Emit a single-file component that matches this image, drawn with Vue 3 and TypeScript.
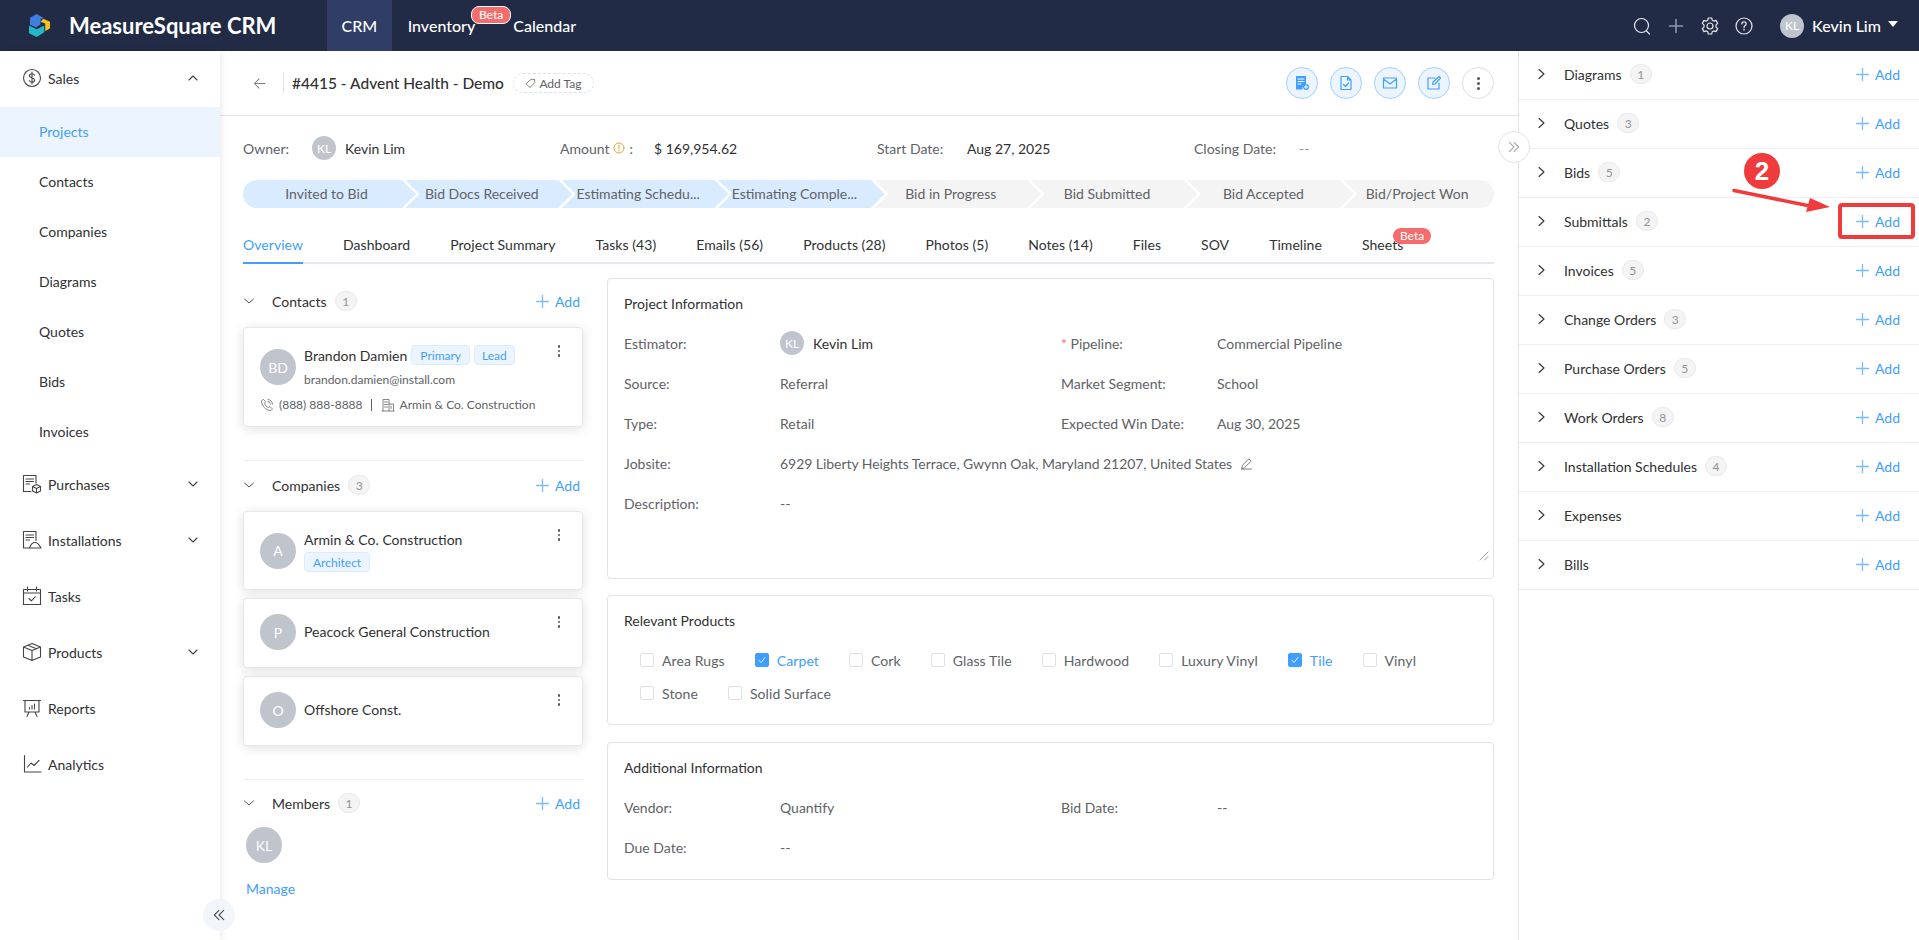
<template>
  <div class="app">
    <header class="topbar">
      <svg class="logo" viewBox="0 0 22 24">
        <path d="M8 0l7 4-3 2v5l-5 3-6-3V4z" fill="#3f7fe0" />
        <path d="M15 5l7 3v7l-5 3v-8l-5-2z" fill="#f5c21b" />
        <path d="M0 12l8 4 8-4v7l-8 5-8-4z" fill="#22b8c9" />
      </svg>
      <div class="brand">MeasureSquare CRM</div>
      <nav class="topnav">
        <a class="topnav-item active">CRM</a>
        <a class="topnav-item inventory">Inventory<span class="beta beta-top">Beta</span></a>
        <a class="topnav-item calendar">Calendar</a>
      </nav>
      <div class="top-right">
        <svg class="top-icon" viewBox="0 0 20 20"><path d="M9.5 2.5a7 7 0 1 0 0 14a7 7 0 0 0 0-14z M14.5 15l3 3" /></svg>
        <svg class="top-icon plus-icon" viewBox="0 0 20 20"><path d="M10 3.500v13 M3.500 10h13" /></svg>
        <svg class="top-icon" viewBox="0 0 20 20"><path d="M8.300 2h3.400l.5 2.200 1.600.9 2.200-.7 1.700 3-1.700 1.500v2.200l1.700 1.500-1.700 3-2.200-.7-1.600.9-.5 2.200H8.300l-.5-2.200-1.600-.9-2.200.7-1.700-3 1.700-1.500V8.900L2.300 7.400l1.700-3 2.200.7 1.600-.9z M10 7a3 3 0 1 0 0 6a3 3 0 0 0 0-6z" /></svg>
        <svg class="top-icon" viewBox="0 0 20 20"><path d="M10 2a8 8 0 1 0 0 16a8 8 0 0 0 0-16z M7.800 8c0-1.300 1-2.100 2.200-2.100s2.200.8 2.200 2c0 1.700-2.200 1.700-2.200 3.500 M10 13.200v1" /></svg>
        <div class="avatar avatar-top">KL</div>
        <span class="top-name">Kevin Lim</span>
        <span class="caret"></span>
      </div>
    </header>

    <div class="body">
      <aside class="sidebar">
        <div class="side-group">
          <svg class="side-icon" viewBox="0 0 20 20"><path :d="icons.sales" /></svg>
          <span class="side-label">Sales</span>
          <svg class="side-chev" viewBox="0 0 12 12"><path d="M2 8l4-4 4 4" /></svg>
        </div>
        <div v-for="s in subItems" :key="s" class="side-sub" :class="{ active: s === 'Projects' }">{{ s }}</div>
        <div v-for="g in groups" :key="g.name" class="side-group">
          <svg class="side-icon" viewBox="0 0 20 20"><path :d="g.icon" /></svg>
          <span class="side-label">{{ g.name }}</span>
          <svg v-if="g.more" class="side-chev" viewBox="0 0 12 12"><path d="M2 4l4 4 4-4" /></svg>
        </div>
        <button class="collapse-btn">
          <svg viewBox="0 0 12 12"><path d="M6 2L2 6l4 4 M10 2L6 6l4 4" /></svg>
        </button>
      </aside>

      <main class="main">
        <div class="title-row">
          <svg class="back" viewBox="0 0 14 14"><path d="M13 7H1.500 M6.500 2L1.500 7l5 5" /></svg>
          <span class="title-div"></span>
          <h1 class="title">#4415 - Advent Health - Demo</h1>
          <span class="add-tag">
            <svg viewBox="0 0 12 12"><path d="M7 1.500h3.500V5L5.500 10.500 1.500 6.500z" /></svg>
            Add Tag
          </span>
          <div class="actions">
            <span class="act">
              <svg viewBox="0 0 16 16"><path class="fill" d="M2 1h10v8.500a4 4 0 0 0-3.500 5H2z" /><path class="cut" d="M4 4h6 M4 6.500h6 M4 9h3" /><circle class="fill" cx="12" cy="12" r="3" /><path class="cut" d="M12 10.300v3.400 M10.300 12h3.400" /></svg>
            </span>
            <span class="act">
              <svg viewBox="0 0 16 16"><path class="line" d="M3 1.500h6.500L13 5v9.500H3z M9.500 1.500V5H13 M5.500 9.500L7.500 11.500 10.500 8" /></svg>
            </span>
            <span class="act">
              <svg viewBox="0 0 16 16"><path class="line" d="M1.500 3h13v10h-13z M1.500 4L8 9l6.500-5" /></svg>
            </span>
            <span class="act">
              <svg viewBox="0 0 16 16"><path class="line" d="M13 8v6H2V3h7 M6.500 9.500l.5-2.500L13 1.500 14.500 3 9 9z" /></svg>
            </span>
            <span class="act act-more"><i></i><i></i><i></i></span>
          </div>
        </div>

        <div class="page">
          <div class="summary">
            <div class="sum-item">
              <span class="sum-label owner-label">Owner:</span>
              <div class="avatar avatar-sm">KL</div>
              <span class="sum-name">Kevin Lim</span>
            </div>
            <div class="sum-item">
              <span class="sum-label amount-label">Amount
                <svg class="warn" viewBox="0 0 12 12"><circle cx="6" cy="6" r="5" /><path d="M6 3v3.600 M6 8.200v1" /></svg> :
              </span>
              <span class="sum-value">$ 169,954.62</span>
            </div>
            <div class="sum-item">
              <span class="sum-label start-label">Start Date:</span>
              <span class="sum-value">Aug 27, 2025</span>
            </div>
            <div class="sum-item">
              <span class="sum-label closing-label">Closing Date:</span>
              <span class="sum-value muted">--</span>
            </div>
          </div>

          <div class="stages">
            <div v-for="(st, i) in stages" :key="st" class="stage" :class="{ done: i < 4, first: i === 0, last: i === stages.length - 1 }">{{ st }}</div>
          </div>

          <div class="tabs">
            <div v-for="t in tabs" :key="t" class="tab" :class="{ active: t === 'Overview' }">
              {{ t }}
              <span v-if="t === 'Sheets'" class="beta beta-tab">Beta</span>
            </div>
          </div>

          <div class="content">
            <section class="left">
              <div class="sec sec-first">
                <div class="sec-head">
                  <svg class="sec-chev" viewBox="0 0 12 12"><path d="M1.500 4l4.500 4 4.500-4" /></svg>
                  <span class="sec-title">Contacts</span>
                  <span class="count">1</span>
                  <span class="add add-right"><svg class="plus" viewBox="0 0 14 14"><path d="M7 .5v13 M.5 7h13" /></svg>Add</span>
                </div>
                <div class="card contact-card">
                  <div class="contact-top">
                    <div class="avatar avatar-md">BD</div>
                    <div class="contact-main">
                      <div class="contact-name">Brandon Damien <span class="tag">Primary</span><span class="tag tag-lead">Lead</span></div>
                      <div class="contact-mail">brandon.damien@install.com</div>
                    </div>
                  </div>
                  <div class="contact-meta">
                    <svg class="meta-icon" viewBox="0 0 14 14"><path d="M3 1.500L1.500 3c0 5 4.500 9.500 9.500 9.500l1.500-1.500-2.500-2.500-1.500 1C6.500 8.800 5.200 7.500 4.500 5.500l1-1.500z M8 1.500A4.500 4.500 0 0 1 12.500 6 M8 3.500A2.500 2.500 0 0 1 10.500 6" /></svg>
                    <span>(888) 888-8888</span>
                    <span class="meta-sep"></span>
                    <svg class="meta-icon" viewBox="0 0 14 14"><path d="M1 13h12 M2 13V1.500h6V13 M8 6h4.500v7 M3.500 4h3 M3.500 6.500h3 M3.500 9h3 M10 8.500v2" /></svg>
                    <span>Armin &amp; Co. Construction</span>
                  </div>
                  <span class="dots"><i></i><i></i><i></i></span>
                </div>
              </div>

              <div class="sec">
                <div class="sec-head">
                  <svg class="sec-chev" viewBox="0 0 12 12"><path d="M1.500 4l4.500 4 4.500-4" /></svg>
                  <span class="sec-title">Companies</span>
                  <span class="count">3</span>
                  <span class="add add-right"><svg class="plus" viewBox="0 0 14 14"><path d="M7 .5v13 M.5 7h13" /></svg>Add</span>
                </div>
                <div class="company-list">
                  <div v-for="c in companies" :key="c.name" class="card company" :class="{ tall: c.tag }">
                    <div class="avatar avatar-md">{{ c.name[0] }}</div>
                    <div class="company-main">
                      <div class="company-name">{{ c.name }}</div>
                      <span v-if="c.tag" class="tag tag-arch">{{ c.tag }}</span>
                    </div>
                    <span class="dots"><i></i><i></i><i></i></span>
                  </div>
                </div>
              </div>

              <div class="sec sec-members">
                <div class="sec-head">
                  <svg class="sec-chev" viewBox="0 0 12 12"><path d="M1.500 4l4.500 4 4.500-4" /></svg>
                  <span class="sec-title">Members</span>
                  <span class="count">1</span>
                  <span class="add add-right"><svg class="plus" viewBox="0 0 14 14"><path d="M7 .5v13 M.5 7h13" /></svg>Add</span>
                </div>
                <div class="avatar avatar-md member">KL</div>
                <a class="manage">Manage</a>
              </div>
            </section>

            <section class="right">
              <div class="panel panel-info">
                <div class="panel-title">Project Information</div>
                <div class="form-grid">
                  <span class="f-label">Estimator:</span>
                  <span class="f-value est"><span class="avatar avatar-sm">KL</span><b>Kevin Lim</b></span>
                  <span class="f-label"><em>*</em> Pipeline:</span>
                  <span class="f-value">Commercial Pipeline</span>

                  <span class="f-label">Source:</span>
                  <span class="f-value">Referral</span>
                  <span class="f-label">Market Segment:</span>
                  <span class="f-value">School</span>

                  <span class="f-label">Type:</span>
                  <span class="f-value">Retail</span>
                  <span class="f-label">Expected Win Date:</span>
                  <span class="f-value">Aug 30, 2025</span>

                  <span class="f-label">Jobsite:</span>
                  <span class="f-value span3 jobsite">6929 Liberty Heights Terrace, Gwynn Oak, Maryland 21207, United States
                    <svg class="pencil" viewBox="0 0 14 14"><path d="M2 12l.6-3L9.500 2 12 4.500 5 11.400z M1.500 13h11" /></svg>
                  </span>

                  <span class="f-label">Description:</span>
                  <span class="f-value span3 muted">--</span>
                </div>
                <svg class="resize" viewBox="0 0 10 10"><path d="M1 9l8-8 M5.500 9L9 5.500" /></svg>
              </div>

              <div class="panel panel-products">
                <div class="panel-title">Relevant Products</div>
                <div class="checks">
                  <label v-for="p in products" :key="p.name" class="check" :class="{ on: p.on }">
                    <span class="box">
                      <svg v-if="p.on" viewBox="0 0 14 14"><path d="M3.500 7.300l2.400 2.700 4.600-6" /></svg>
                    </span>
                    {{ p.name }}
                  </label>
                </div>
              </div>

              <div class="panel panel-extra">
                <div class="panel-title">Additional Information</div>
                <div class="form-grid">
                  <span class="f-label">Vendor:</span>
                  <span class="f-value">Quantify</span>
                  <span class="f-label">Bid Date:</span>
                  <span class="f-value muted">--</span>
                  <span class="f-label">Due Date:</span>
                  <span class="f-value span3 muted">--</span>
                </div>
              </div>
            </section>
          </div>
        </div>
      </main>

      <aside class="related">
        <button class="expand-btn">
          <svg viewBox="0 0 12 12"><path d="M2 2l4 4-4 4 M6 2l4 4-4 4" /></svg>
        </button>
        <div v-for="r in related" :key="r.name" class="rel-row">
          <svg class="rel-chev" viewBox="0 0 12 12"><path d="M4 1.500L9 6l-5 4.500" /></svg>
          <span class="rel-name">{{ r.name }}</span>
          <span v-if="r.count" class="count">{{ r.count }}</span>
          <span class="add add-right"><svg class="plus" viewBox="0 0 14 14"><path d="M7 .5v13 M.5 7h13" /></svg>Add</span>
        </div>
      </aside>
    </div>

    <div class="mark-num">2</div>
    <svg class="mark-arrow" viewBox="0 0 105 30">
      <path d="M4 4.500L85 21" />
      <polygon points="80,12 100,21 76,26" />
    </svg>
    <div class="mark-box"></div>
  </div>
</template>

<script setup lang="ts">
const icons = {
  sales:
    'M10 1.500a8.500 8.500 0 1 0 0 17a8.500 8.500 0 0 0 0-17z M12.500 7.200c-.4-1-1.400-1.500-2.500-1.500-1.500 0-2.600.8-2.600 2 0 2.800 5.200 1.400 5.200 4.400 0 1.200-1.100 2.100-2.600 2.100-1.200 0-2.200-.6-2.600-1.600 M10 4v12',
}

const subItems = ['Projects', 'Contacts', 'Companies', 'Diagrams', 'Quotes', 'Bids', 'Invoices']

const groups = [
  {
    name: 'Purchases',
    more: true,
    icon: 'M9 17.500H1.500V1.500h12.500v7.500 M4 5h7.500 M4 7.500h7.500 M4 10h3.500 M14.500 10.500l4 2v4.500l-4 2-4-2v-4.500z M10.500 12.500l4 2 4-2 M14.500 14.500v4.500',
  },
  {
    name: 'Installations',
    more: true,
    icon: 'M8 18H1.500V1.500h12.500v9 M4 5h7.500 M4 7.500h7.500 M4 10h3.500 M7.500 18c1-3 3-5.500 5.500-5.500s4.500 2.500 6 5.500z',
  },
  {
    name: 'Tasks',
    more: false,
    icon: 'M1.500 3.500h17v15h-17z M1.500 7h17 M5.500 1v4 M14.500 1v4 M7 12.500l2.300 2.300 3.900-4',
  },
  {
    name: 'Products',
    more: true,
    icon: 'M10 1.500l8.500 3.500v10L10 18.500 1.500 15V5z M1.500 5l8.500 3.500L18.500 5 M10 8.500v10 M6 3.200l8.500 3.500',
  },
  {
    name: 'Reports',
    more: false,
    icon: 'M1.500 2.500h17 M3 2.500v11.500h14V2.500 M7 14l-2 4.500 M13 14l2 4.500 M7.500 11V9.500 M10 11V7.500 M12.500 11V6',
  },
  {
    name: 'Analytics',
    more: false,
    icon: 'M2.500 1.500v16.500h16.500 M5.500 13l3.500-4 3 2.500 5-5',
  },
]

const stages = [
  'Invited to Bid',
  'Bid Docs Received',
  'Estimating Schedu...',
  'Estimating Comple...',
  'Bid in Progress',
  'Bid Submitted',
  'Bid Accepted',
  'Bid/Project Won',
]

const tabs = [
  'Overview',
  'Dashboard',
  'Project Summary',
  'Tasks (43)',
  'Emails (56)',
  'Products (28)',
  'Photos (5)',
  'Notes (14)',
  'Files',
  'SOV',
  'Timeline',
  'Sheets',
]

const companies = [
  { name: 'Armin & Co. Construction', tag: 'Architect' },
  { name: 'Peacock General Construction', tag: '' },
  { name: 'Offshore Const.', tag: '' },
]

const products = [
  { name: 'Area Rugs', on: false },
  { name: 'Carpet', on: true },
  { name: 'Cork', on: false },
  { name: 'Glass Tile', on: false },
  { name: 'Hardwood', on: false },
  { name: 'Luxury Vinyl', on: false },
  { name: 'Tile', on: true },
  { name: 'Vinyl', on: false },
  { name: 'Stone', on: false },
  { name: 'Solid Surface', on: false },
]

const related = [
  { name: 'Diagrams', count: 1 },
  { name: 'Quotes', count: 3 },
  { name: 'Bids', count: 5 },
  { name: 'Submittals', count: 2 },
  { name: 'Invoices', count: 5 },
  { name: 'Change Orders', count: 3 },
  { name: 'Purchase Orders', count: 5 },
  { name: 'Work Orders', count: 8 },
  { name: 'Installation Schedules', count: 4 },
  { name: 'Expenses', count: 0 },
  { name: 'Bills', count: 0 },
]
</script>

<style>
html,
body {
  margin: 0;
  background: #fff;
}
</style>

<style scoped>
.app {
  position: relative;
  width: 1919px;
  height: 940px;
  overflow: hidden;
  font-family: Lato, "Noto Sans", sans-serif;
  font-size: 14px;
  color: #303133;
  background: #fff;
}

svg {
  display: block;
  fill: none;
  stroke-linecap: round;
  stroke-linejoin: round;
}

/* top bar */
.topbar {
  height: 51px;
  background: #222b45;
  display: flex;
  align-items: center;
  padding-left: 29px;
  color: #fff;
}

.logo {
  width: 21px;
  height: 23px;
  margin-right: 19px;
}

.brand {
  font-size: 22px;
  font-weight: 700;
  width: 258px;
  white-space: nowrap;
}

.topnav {
  display: flex;
  height: 100%;
}

.topnav-item {
  position: relative;
  display: flex;
  align-items: center;
  padding: 0 14px;
  font-size: 16px;
  font-weight: 500;
}

.topnav-item.active {
  background: #303d66;
  padding: 0 14.5px;
}

.topnav-item.inventory {
  padding-left: 16px;
}

.topnav-item.calendar {
  padding-left: 24px;
}

.beta {
  position: absolute;
  background: #f56c6c;
  color: #fff;
  font-size: 12px;
  line-height: 16px;
  height: 16px;
  border-radius: 8px;
  padding: 0 7px;
  border: 1px solid #fff;
}

.beta-top {
  right: -22px;
  top: 6px;
}

.top-right {
  margin-left: auto;
  display: flex;
  align-items: center;
  padding-right: 21px;
}

.top-icon {
  width: 20px;
  height: 20px;
  margin-right: 14px;
  stroke: #e8e8ec;
  stroke-width: 1.2;
}

.plus-icon {
  stroke: #8f95a8;
  stroke-width: 1.6;
}

.avatar {
  border-radius: 50%;
  background: #c0c4cc;
  color: #fff;
  display: flex;
  align-items: center;
  justify-content: center;
  flex: none;
}

.avatar-top {
  width: 24px;
  height: 24px;
  font-size: 12px;
  margin-left: 12px;
}

.top-name {
  font-size: 16px;
  font-weight: 500;
  margin-left: 8px;
}

.caret {
  width: 0;
  height: 0;
  border-left: 5px solid transparent;
  border-right: 5px solid transparent;
  border-top: 6px solid #fff;
  margin-left: 7px;
  margin-bottom: 3px;
}

.body {
  display: flex;
  height: 889px;
}

/* sidebar */
.sidebar {
  position: relative;
  width: 220px;
  flex: none;
  box-shadow: 2px 0 6px rgba(0, 0, 0, 0.08);
  z-index: 2;
  background: #fff;
}

.side-group {
  display: flex;
  align-items: center;
  height: 56px;
  box-sizing: border-box;
  padding: 0 21px 2px 22px;
  color: #303133;
}

.side-icon {
  width: 20px;
  height: 20px;
  stroke: #444;
  stroke-width: 1.1;
  flex: none;
}

.side-label {
  margin-left: 6px;
}

.side-chev {
  margin-left: auto;
  width: 12px;
  height: 12px;
  stroke: #444;
  stroke-width: 1.1;
}

.side-sub {
  height: 50px;
  line-height: 50px;
  padding-left: 39px;
}

.side-sub.active {
  background: #ecf5ff;
  color: #409eff;
}

.collapse-btn {
  position: absolute;
  right: -15px;
  bottom: 9px;
  width: 32px;
  height: 32px;
  border-radius: 50%;
  border: 0;
  padding: 0;
  background: #f2f5f9;
  display: flex;
  align-items: center;
  justify-content: center;
}

.collapse-btn svg {
  width: 14px;
  height: 14px;
  stroke: #555;
}

/* main column */
.main {
  flex: none;
  width: 1298px;
  min-width: 0;
}

.title-row {
  height: 65px;
  box-sizing: border-box;
  border-bottom: 1px solid #e0e3ea;
  display: flex;
  align-items: center;
  padding: 0 24px 0 33px;
}

.back {
  width: 13px;
  height: 13px;
  stroke: #808080;
  stroke-width: 1.1;
}

.title-div {
  width: 1px;
  height: 20px;
  background: #dcdfe6;
  margin: 0 8px 0 17px;
}

.title {
  margin: 0;
  font-size: 15.5px;
  font-weight: 500;
  color: #303133;
  white-space: nowrap;
}

.add-tag {
  margin-left: 9px;
  height: 20px;
  width: 81px;
  box-sizing: border-box;
  border: 1px dashed #dcdfe6;
  border-radius: 10px;
  display: flex;
  align-items: center;
  justify-content: center;
  gap: 3px;
  font-size: 12px;
  color: #606266;
}

.add-tag svg {
  width: 11px;
  height: 11px;
  stroke: #666;
  stroke-width: 0.9;
}

.actions {
  margin-left: auto;
  display: flex;
  gap: 12px;
}

.act {
  width: 32px;
  height: 32px;
  box-sizing: border-box;
  border-radius: 50%;
  background: #ecf5ff;
  border: 1px solid #a0cfff;
  display: flex;
  align-items: center;
  justify-content: center;
}

.act svg {
  width: 16px;
  height: 16px;
}

.act .fill {
  fill: #409eff;
}

.act .cut {
  stroke: #fff;
  stroke-width: 1;
}

.act .line {
  stroke: #409eff;
  stroke-width: 1.2;
}

.act-more {
  background: #fff;
  border-color: #dcdfe6;
  flex-direction: column;
  gap: 2px;
}

.act-more i,
.dots i {
  display: block;
  width: 3px;
  height: 3px;
  border-radius: 50%;
  background: #555;
}

.page {
  padding: 0 24px 0 23px;
}

.summary {
  display: grid;
  grid-template-columns: repeat(4, 317px);
  height: 22px;
  margin-top: 20px;
}

.sum-item {
  display: flex;
  align-items: center;
  white-space: nowrap;
}

.sum-label {
  color: #606266;
  display: flex;
  align-items: center;
  gap: 4px;
}

.owner-label {
  width: 69px;
}

.amount-label {
  width: 94px;
}

.start-label {
  width: 90px;
}

.closing-label {
  width: 105px;
}

.warn {
  width: 12px;
  height: 12px;
  stroke: #e6a23c;
  stroke-width: 1;
}

.avatar-sm {
  width: 24px;
  height: 24px;
  font-size: 12px;
}

.sum-name {
  margin-left: 9px;
}

.sum-value {
  color: #303133;
}

.muted {
  color: #909399;
}

/* stage bar */
.stages {
  display: flex;
  height: 28px;
  margin-top: 22px;
  border-radius: 14px;
  overflow: hidden;
}

.stage {
  flex: 0 0 170px;
  margin-left: -13.7px;
  background: #f4f4f5;
  color: #606266;
  text-align: center;
  line-height: 28px;
  padding: 0 14px 0 3px;
  box-sizing: border-box;
  white-space: nowrap;
  clip-path: polygon(3px 0, calc(100% - 14px) 0, 100% 50%, calc(100% - 14px) 100%, 3px 100%, 17px 50%);
}

.stage.done {
  background: #d9ebff;
}

.stage.first {
  flex-basis: 173px;
  margin-left: 0;
  padding: 0 6px 0 0;
  clip-path: polygon(0 0, calc(100% - 14px) 0, 100% 50%, calc(100% - 14px) 100%, 0 100%);
}

.stage.last {
  flex: 1 1 0;
  padding: 0;
  clip-path: polygon(3px 0, 100% 0, 100% 100%, 3px 100%, 17px 50%);
}

/* tabs */
.tabs {
  display: flex;
  gap: 40px;
  margin-top: 19px;
  height: 37px;
  box-sizing: border-box;
  border-bottom: 2px solid #e4e7ed;
  letter-spacing: 0.05px;
}

.tab {
  position: relative;
  height: 37px;
  line-height: 35px;
  box-sizing: border-box;
  white-space: nowrap;
}

.tab.active {
  color: #409eff;
  border-bottom: 2px solid #409eff;
}

.beta-tab {
  right: -28px;
  top: 1px;
  border: 0;
  line-height: 16px;
}

/* content */
.content {
  display: flex;
  gap: 24px;
  margin-top: 14px;
}

.left {
  width: 340px;
  flex: none;
}

.right {
  flex: 1;
  min-width: 0;
  display: flex;
  flex-direction: column;
  gap: 16px;
}

.sec {
  padding-top: 12px;
  padding-bottom: 33px;
  border-bottom: 1px solid #ebeef5;
}

.sec-first {
  padding-top: 11px;
}

.sec-members {
  border-bottom: 0;
  padding-top: 11px;
  padding-bottom: 0;
}

.sec-head {
  display: flex;
  align-items: center;
  height: 24px;
}

.sec-chev {
  width: 12px;
  height: 12px;
  margin-right: 17px;
  stroke: #555;
  stroke-width: 1;
}

.sec-title {
  margin-right: 8px;
}

.count {
  display: inline-flex;
  align-items: center;
  justify-content: center;
  min-width: 22px;
  height: 20px;
  box-sizing: border-box;
  border: 1px solid #e9e9eb;
  border-radius: 10px;
  background: #f4f4f5;
  color: #909399;
  font-size: 12px;
}

.add {
  color: #409eff;
  display: flex;
  align-items: center;
  white-space: nowrap;
}

.add-right {
  margin-left: auto;
  padding-right: 3px;
}

.plus {
  width: 13px;
  height: 13px;
  margin-right: 6px;
  stroke: #79bbff;
  stroke-width: 1.4;
}

.card {
  position: relative;
  box-sizing: border-box;
  border: 1px solid #e4e7ed;
  border-radius: 4px;
  background: #fff;
  box-shadow: 0 2px 12px rgba(0, 0, 0, 0.12);
}

.contact-card {
  height: 100px;
  margin-top: 14px;
  padding: 21px 16px 0;
}

.contact-top {
  display: flex;
  gap: 8px;
}

.avatar-md {
  width: 36px;
  height: 36px;
  font-size: 14px;
}

.contact-name {
  display: flex;
  align-items: center;
  gap: 4px;
  margin-top: -4px;
  height: 20px;
  white-space: nowrap;
}

.tag {
  display: inline-flex;
  align-items: center;
  height: 20px;
  box-sizing: border-box;
  padding: 0 8px;
  background: #ecf5ff;
  border: 1px solid #d9ecff;
  border-radius: 4px;
  color: #409eff;
  font-size: 12px;
}

.tag-lead {
  padding: 0 7px;
}

.contact-mail {
  font-size: 12px;
  color: #606266;
  margin-top: 7px;
}

.contact-meta {
  display: flex;
  align-items: center;
  font-size: 12px;
  color: #606266;
  margin-top: 10px;
  white-space: nowrap;
}

.meta-icon {
  width: 14px;
  height: 14px;
  stroke: #666;
  stroke-width: 0.8;
  margin-right: 5px;
}

.meta-sep {
  width: 1px;
  height: 12px;
  background: #606266;
  margin: 0 9px 0 8px;
}

.dots {
  position: absolute;
  top: 17px;
  right: 22px;
  display: flex;
  flex-direction: column;
  gap: 2px;
}

.dots i {
  width: 2.5px;
  height: 2.5px;
}

.company-list {
  display: flex;
  flex-direction: column;
  gap: 8px;
  margin-top: 14px;
}

.company {
  height: 70px;
  display: flex;
  align-items: center;
  gap: 8px;
  padding: 0 16px 2px;
}

.company.tall {
  height: 79px;
  padding-bottom: 0;
}

.company-main {
  display: flex;
  flex-direction: column;
  align-items: flex-start;
  gap: 4px;
  margin-bottom: 2px;
}

.company.tall .company-main {
  margin-bottom: 0;
  margin-top: 2px;
}

.member {
  margin: 12px 0 0 3px;
}

.manage {
  display: block;
  margin: 17px 0 0 3px;
  color: #409eff;
  line-height: 18px;
}

.panel {
  position: relative;
  box-sizing: border-box;
  border: 1px solid #dfe3ea;
  border-radius: 4px;
  padding: 15px 16px 0;
}

.panel-title {
  line-height: 20px;
  height: 20px;
}

.panel-info {
  height: 301px;
}

.panel-products {
  height: 130px;
}

.panel-extra {
  height: 138px;
  margin-top: 1px;
}

.form-grid {
  display: grid;
  grid-template-columns: 156px 281px 156px 1fr;
  grid-auto-rows: 40px;
  align-items: center;
  margin-top: 9px;
}

.f-label {
  color: #606266;
  white-space: nowrap;
}

.f-label em {
  color: #f56c6c;
  font-style: normal;
}

.f-value {
  color: #606266;
  white-space: nowrap;
}

.span3 {
  grid-column: span 3;
  display: flex;
  align-items: center;
}

.jobsite {
  letter-spacing: -0.05px;
}

.est {
  display: flex;
  align-items: center;
  gap: 9px;
}

.est b {
  font-weight: 400;
  color: #303133;
}

.pencil {
  width: 13px;
  height: 13px;
  margin-left: 8px;
  stroke: #666;
  stroke-width: 0.9;
}

.resize {
  position: absolute;
  right: 4px;
  bottom: 17px;
  width: 10px;
  height: 10px;
  stroke: #909399;
  stroke-width: 0.9;
}

.checks {
  display: flex;
  flex-wrap: wrap;
  column-gap: 30px;
  row-gap: 1px;
  padding-left: 16px;
  margin-top: 13px;
  letter-spacing: 0.1px;
}

.check {
  display: flex;
  align-items: center;
  gap: 8px;
  height: 32px;
  color: #606266;
}

.check.on {
  color: #409eff;
}

.box {
  width: 14px;
  height: 14px;
  box-sizing: border-box;
  border: 1px solid #dcdfe6;
  border-radius: 2px;
  background: #fff;
}

.check.on .box {
  background: #409eff;
  border-color: #409eff;
}

.box svg {
  width: 12px;
  height: 12px;
  stroke: #fff;
  stroke-width: 1;
}

/* related panel */
.related {
  position: relative;
  flex: 1;
  min-width: 0;
  border-left: 1px solid #dfe3ea;
}

.expand-btn {
  position: absolute;
  left: -21px;
  top: 80px;
  width: 32px;
  height: 32px;
  border-radius: 50%;
  border: 1px solid #dfe3ea;
  background: #fff;
  padding: 0;
  display: flex;
  align-items: center;
  justify-content: center;
  z-index: 2;
}

.expand-btn svg {
  width: 14px;
  height: 14px;
  stroke: #aaa;
}

.rel-row {
  height: 49px;
  box-sizing: border-box;
  border-bottom: 1px solid #ebeef5;
  display: flex;
  align-items: center;
  padding: 0 16px 2px 16px;
}

.rel-chev {
  width: 12px;
  height: 12px;
  margin-right: 17px;
  stroke: #333;
  stroke-width: 1.1;
}

.rel-name {
  margin-right: 8px;
}

/* annotation */
.mark-num {
  position: absolute;
  left: 1744px;
  top: 153px;
  width: 36px;
  height: 36px;
  border-radius: 50%;
  background: #ef3b3b;
  color: #fff;
  font-family: "Liberation Sans", sans-serif;
  font-size: 26px;
  font-weight: 700;
  display: flex;
  align-items: center;
  justify-content: center;
}

.mark-arrow {
  position: absolute;
  left: 1730px;
  top: 186px;
  width: 105px;
  height: 30px;
}

.mark-arrow path {
  stroke: #ef3b3b;
  stroke-width: 3.5;
}

.mark-arrow polygon {
  fill: #ef3b3b;
}

.mark-box {
  position: absolute;
  left: 1838px;
  top: 203px;
  width: 77px;
  height: 36px;
  box-sizing: border-box;
  border: 4px solid #ef3b3b;
  border-radius: 4px;
}
</style>
